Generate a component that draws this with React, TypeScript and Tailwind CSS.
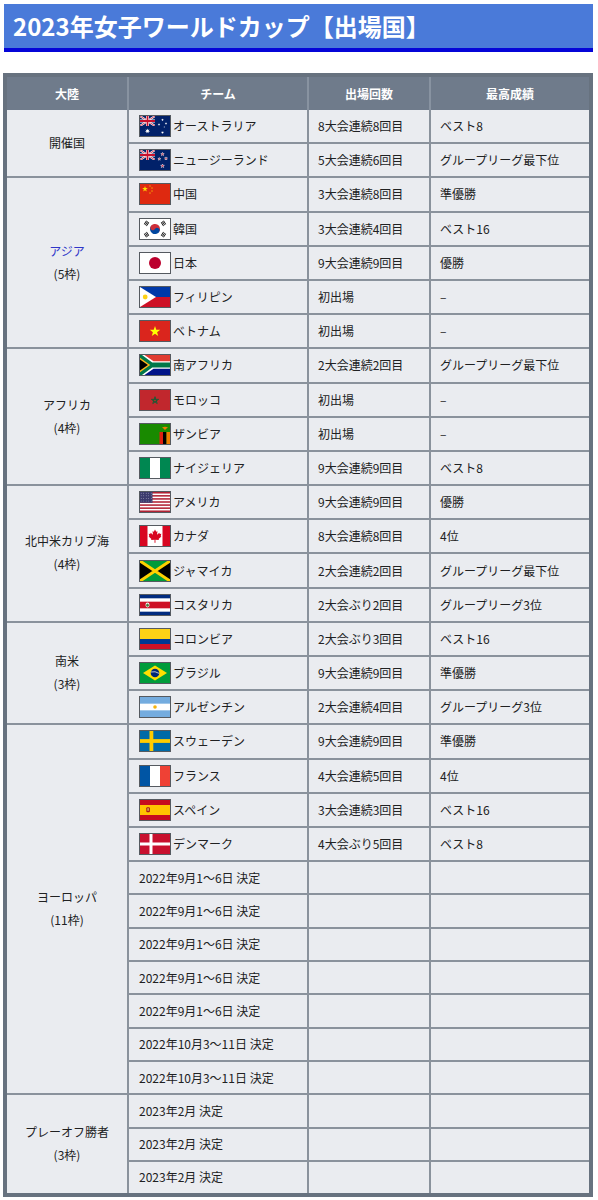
import React from "react";

const star = (cx: number, cy: number, r: number, n = 5, inner = 0.4) => {
  const pts: string[] = [];
  for (let i = 0; i < n * 2; i++) {
    const a = ((-90 + (i * 180) / n) * Math.PI) / 180;
    const rr = i % 2 ? r * inner : r;
    pts.push(`${(cx + rr * Math.cos(a)).toFixed(2)},${(cy + rr * Math.sin(a)).toFixed(2)}`);
  }
  return pts.join(" ");
};

const pentagram = (cx: number, cy: number, r: number) => {
  const pts: string[] = [];
  for (let i = 0; i < 5; i++) {
    const a = ((-90 + i * 144) * Math.PI) / 180;
    pts.push(`${(cx + r * Math.cos(a)).toFixed(2)},${(cy + r * Math.sin(a)).toFixed(2)}`);
  }
  return pts.join(" ");
};

const UnionJack = ({ id }: { id: string }) => (
  <g>
    <clipPath id={id}>
      <rect width="15" height="10" />
    </clipPath>
    <g clipPath={`url(#${id})`}>
      <rect width="15" height="10" fill="#012169" />
      <path d="M0,0 L15,10 M15,0 L0,10" stroke="#fff" strokeWidth="2" />
      <path d="M0,0 L15,10 M15,0 L0,10" stroke="#C8102E" strokeWidth="0.8" />
      <path d="M7.5,0 V10 M0,5 H15" stroke="#fff" strokeWidth="3" />
      <path d="M7.5,0 V10 M0,5 H15" stroke="#C8102E" strokeWidth="1.8" />
    </g>
  </g>
);

const FlagSvg = ({ code }: { code: string }) => {
  switch (code) {
    case "au":
      return (
        <>
          <rect width="30" height="20" fill="#012169" />
          <UnionJack id="ujau" />
          <polygon points={star(7.5, 15, 2.6, 7, 0.45)} fill="#fff" />
          <polygon points={star(22.5, 16.5, 1.5, 7, 0.45)} fill="#fff" />
          <polygon points={star(19, 8.5, 1.3, 7, 0.45)} fill="#fff" />
          <polygon points={star(22.5, 3.8, 1.3, 7, 0.45)} fill="#fff" />
          <polygon points={star(26, 7.5, 1.3, 7, 0.45)} fill="#fff" />
          <polygon points={star(24.3, 11, 0.8, 5, 0.45)} fill="#fff" />
        </>
      );
    case "nz":
      return (
        <>
          <rect width="30" height="20" fill="#012169" />
          <UnionJack id="ujnz" />
          {[
            [22.5, 4.2, 1.8],
            [26, 8.5, 1.6],
            [19.3, 9, 1.5],
            [22.5, 16, 2],
          ].map(([x, y, r], i) => (
            <polygon key={i} points={star(x, y, r)} fill="#C8102E" stroke="#fff" strokeWidth="0.5" />
          ))}
        </>
      );
    case "cn":
      return (
        <>
          <rect width="30" height="20" fill="#DE2910" />
          <polygon points={star(5, 5, 3)} fill="#FFDE00" />
          <polygon points={star(10, 2, 1)} fill="#FFDE00" />
          <polygon points={star(12, 4, 1)} fill="#FFDE00" />
          <polygon points={star(12, 7, 1)} fill="#FFDE00" />
          <polygon points={star(10, 9, 1)} fill="#FFDE00" />
        </>
      );
    case "kr": {
      const tri = (x: number, y: number, rot: number) => (
        <g transform={`translate(${x} ${y}) rotate(${rot})`}>
          <rect x="-2.2" y="-1.8" width="4.4" height="0.8" fill="#000" />
          <rect x="-2.2" y="-0.4" width="4.4" height="0.8" fill="#000" />
          <rect x="-2.2" y="1" width="4.4" height="0.8" fill="#000" />
        </g>
      );
      return (
        <>
          <rect width="30" height="20" fill="#fff" />
          <g transform="rotate(33.7 15 10)">
            <path d="M10,10 A5,5 0 0 1 20,10 Z" fill="#CD2E3A" />
            <path d="M10,10 A5,5 0 0 0 20,10 Z" fill="#0047A0" />
            <circle cx="12.5" cy="10" r="2.5" fill="#CD2E3A" />
            <circle cx="17.5" cy="10" r="2.5" fill="#0047A0" />
          </g>
          {tri(6.5, 4.3, -56.3)}
          {tri(23.5, 15.7, -56.3)}
          {tri(23.5, 4.3, 56.3)}
          {tri(6.5, 15.7, 56.3)}
        </>
      );
    }
    case "jp":
      return (
        <>
          <rect width="30" height="20" fill="#fff" />
          <circle cx="15" cy="10" r="6" fill="#BC002D" />
        </>
      );
    case "ph":
      return (
        <>
          <rect width="30" height="10" fill="#0038A8" />
          <rect y="10" width="30" height="10" fill="#CE1126" />
          <polygon points="0,0 16,10 0,20" fill="#fff" />
          <circle cx="5.2" cy="10" r="2.4" fill="#FCD116" />
        </>
      );
    case "vn":
      return (
        <>
          <rect width="30" height="20" fill="#DA251D" />
          <polygon points={star(15, 10.5, 5.5)} fill="#FFFF00" />
        </>
      );
    case "za":
      return (
        <>
          <rect width="30" height="10" fill="#E03C31" />
          <rect y="10" width="30" height="10" fill="#001489" />
          <polygon points="0,0 4.5,0 13.5,6.2 30,6.2 30,13.8 13.5,13.8 4.5,20 0,20" fill="#fff" />
          <polygon points="0,0 2,0 12.2,7.5 30,7.5 30,12.5 12.2,12.5 2,20 0,20" fill="#007749" />
          <polygon points="0,2.8 10.2,10 0,17.2" fill="#FFB81C" />
          <polygon points="0,4.4 7.9,10 0,15.6" fill="#000" />
        </>
      );
    case "ma":
      return (
        <>
          <rect width="30" height="20" fill="#C1272D" />
          <polygon points={pentagram(15, 10.5, 3.8)} fill="none" stroke="#006233" strokeWidth="0.8" />
        </>
      );
    case "zm":
      return (
        <>
          <rect width="30" height="20" fill="#198A00" />
          <rect x="19.5" y="8" width="3.5" height="12" fill="#DE2010" />
          <rect x="23" y="8" width="3.5" height="12" fill="#000" />
          <rect x="26.5" y="8" width="3.5" height="12" fill="#EF7D00" />
          <path d="M22,3.5 Q25,2 28,3.5 L26.5,4.5 L25,6 L23.5,4.5 Z" fill="#EF7D00" />
        </>
      );
    case "ng":
      return (
        <>
          <rect width="30" height="20" fill="#008751" />
          <rect x="10" width="10" height="20" fill="#fff" />
        </>
      );
    case "us": {
      const h = 20 / 13;
      return (
        <>
          <rect width="30" height="20" fill="#fff" />
          {Array.from({ length: 7 }).map((_, i) => (
            <rect key={i} y={i * 2 * h} width="30" height={h} fill="#B22234" />
          ))}
          <rect width="12.5" height={h * 7} fill="#3C3B6E" />
          {Array.from({ length: 20 }).map((_, i) => (
            <circle key={i} cx={1.2 + (i % 5) * 2.5} cy={1.2 + Math.floor(i / 5) * 2.6} r="0.35" fill="#fff" />
          ))}
        </>
      );
    }
    case "ca":
      return (
        <>
          <rect width="30" height="20" fill="#fff" />
          <rect width="7.5" height="20" fill="#D80621" />
          <rect x="22.5" width="7.5" height="20" fill="#D80621" />
          <polygon
            points="15,3.5 16.2,5.8 17.5,5.3 17,8.8 19.3,6.8 19.8,8 21.3,7.7 20.7,10.2 21.4,10.6 18.6,13 19,14.1 15.4,13.7 15.5,16.8 14.5,16.8 14.6,13.7 11,14.1 11.4,13 8.6,10.6 9.3,10.2 8.7,7.7 10.2,8 10.7,6.8 13,8.8 12.5,5.3 13.8,5.8"
            fill="#D80621"
          />
        </>
      );
    case "jm":
      return (
        <>
          <polygon points="0,0 30,0 15,10" fill="#009B3A" />
          <polygon points="0,20 30,20 15,10" fill="#009B3A" />
          <polygon points="0,0 0,20 15,10" fill="#000" />
          <polygon points="30,0 30,20 15,10" fill="#000" />
          <path d="M0,0 L30,20 M30,0 L0,20" stroke="#FED100" strokeWidth="3" />
        </>
      );
    case "cr":
      return (
        <>
          <rect width="30" height="20" fill="#002B7F" />
          <rect y="3.33" width="30" height="13.34" fill="#fff" />
          <rect y="6.67" width="30" height="6.66" fill="#CE1126" />
          <ellipse cx="7.5" cy="10" rx="2" ry="2.4" fill="#fff" />
          <ellipse cx="7.5" cy="10.2" rx="1.3" ry="1.6" fill="#4a7a3a" />
        </>
      );
    case "co":
      return (
        <>
          <rect width="30" height="10" fill="#FCD116" />
          <rect y="10" width="30" height="5" fill="#003893" />
          <rect y="15" width="30" height="5" fill="#CE1126" />
        </>
      );
    case "br":
      return (
        <>
          <rect width="30" height="20" fill="#009C3B" />
          <polygon points="3,10 15,2.5 27,10 15,17.5" fill="#FFDF00" />
          <circle cx="15" cy="10" r="4.3" fill="#002776" />
          <path d="M10.9,9 Q15,7.8 19.2,10.4" stroke="#fff" strokeWidth="0.7" fill="none" />
        </>
      );
    case "ar":
      return (
        <>
          <rect width="30" height="20" fill="#74ACDF" />
          <rect y="6.67" width="30" height="6.66" fill="#fff" />
          <circle cx="15" cy="10" r="1.8" fill="#F6B40E" />
        </>
      );
    case "se":
      return (
        <>
          <rect width="30" height="20" fill="#006AA7" />
          <rect x="9.5" width="3.8" height="20" fill="#FECC00" />
          <rect y="8.1" width="30" height="3.8" fill="#FECC00" />
        </>
      );
    case "fr":
      return (
        <>
          <rect width="10" height="20" fill="#0055A4" />
          <rect x="10" width="10" height="20" fill="#fff" />
          <rect x="20" width="10" height="20" fill="#EF4135" />
        </>
      );
    case "es":
      return (
        <>
          <rect width="30" height="20" fill="#C60B1E" />
          <rect y="5" width="30" height="10" fill="#FFC400" />
          <rect x="6.3" y="7.3" width="3.6" height="5" rx="1" fill="#AD1519" />
          <rect x="7.2" y="8.2" width="1.8" height="2.6" fill="#c8a050" />
        </>
      );
    case "dk":
      return (
        <>
          <rect width="30" height="20" fill="#C8102E" />
          <rect x="9.5" width="3" height="20" fill="#fff" />
          <rect y="8.5" width="30" height="3" fill="#fff" />
        </>
      );
    default:
      return null;
  }
};

const Flag = ({ code }: { code: string }) => (
  <span className="inline-flex w-[32px] h-[22px] border border-[#555a60] shrink-0 bg-white">
    <svg viewBox="0 0 30 20" width="30" height="20" preserveAspectRatio="none" className="block">
      <FlagSvg code={code} />
    </svg>
  </span>
);

type Row = { flag?: string; name: string; c?: string; b?: string };
type Group = { label: string; sub?: string; link?: boolean; rows: Row[] };

const e1 = "2022年9月1〜6日 決定";
const e2 = "2022年10月3〜11日 決定";
const p = "2023年2月 決定";

const groups: Group[] = [
  {
    label: "開催国",
    rows: [
      { flag: "au", name: "オーストラリア", c: "8大会連続8回目", b: "ベスト8" },
      { flag: "nz", name: "ニュージーランド", c: "5大会連続6回目", b: "グループリーグ最下位" },
    ],
  },
  {
    label: "アジア",
    sub: "(5枠)",
    link: true,
    rows: [
      { flag: "cn", name: "中国", c: "3大会連続8回目", b: "準優勝" },
      { flag: "kr", name: "韓国", c: "3大会連続4回目", b: "ベスト16" },
      { flag: "jp", name: "日本", c: "9大会連続9回目", b: "優勝" },
      { flag: "ph", name: "フィリピン", c: "初出場", b: "–" },
      { flag: "vn", name: "ベトナム", c: "初出場", b: "–" },
    ],
  },
  {
    label: "アフリカ",
    sub: "(4枠)",
    rows: [
      { flag: "za", name: "南アフリカ", c: "2大会連続2回目", b: "グループリーグ最下位" },
      { flag: "ma", name: "モロッコ", c: "初出場", b: "–" },
      { flag: "zm", name: "ザンビア", c: "初出場", b: "–" },
      { flag: "ng", name: "ナイジェリア", c: "9大会連続9回目", b: "ベスト8" },
    ],
  },
  {
    label: "北中米カリブ海",
    sub: "(4枠)",
    rows: [
      { flag: "us", name: "アメリカ", c: "9大会連続9回目", b: "優勝" },
      { flag: "ca", name: "カナダ", c: "8大会連続8回目", b: "4位" },
      { flag: "jm", name: "ジャマイカ", c: "2大会連続2回目", b: "グループリーグ最下位" },
      { flag: "cr", name: "コスタリカ", c: "2大会ぶり2回目", b: "グループリーグ3位" },
    ],
  },
  {
    label: "南米",
    sub: "(3枠)",
    rows: [
      { flag: "co", name: "コロンビア", c: "2大会ぶり3回目", b: "ベスト16" },
      { flag: "br", name: "ブラジル", c: "9大会連続9回目", b: "準優勝" },
      { flag: "ar", name: "アルゼンチン", c: "2大会連続4回目", b: "グループリーグ3位" },
    ],
  },
  {
    label: "ヨーロッパ",
    sub: "(11枠)",
    rows: [
      { flag: "se", name: "スウェーデン", c: "9大会連続9回目", b: "準優勝" },
      { flag: "fr", name: "フランス", c: "4大会連続5回目", b: "4位" },
      { flag: "es", name: "スペイン", c: "3大会連続3回目", b: "ベスト16" },
      { flag: "dk", name: "デンマーク", c: "4大会ぶり5回目", b: "ベスト8" },
      { name: e1 },
      { name: e1 },
      { name: e1 },
      { name: e1 },
      { name: e1 },
      { name: e2 },
      { name: e2 },
    ],
  },
  {
    label: "プレーオフ勝者",
    sub: "(3枠)",
    rows: [{ name: p }, { name: p }, { name: p }],
  },
];

export default function App() {
  return (
    <div className="w-[598px] bg-white pt-[4px] pb-[4px] font-['Noto_Sans_CJK_JP','Noto_Sans',sans-serif] text-[#202122]">
      <div className="ml-[4px] mr-[5px] h-[48px] bg-[#4a7ad9] border-b-[4px] border-[#0505d8] flex items-center pl-[9px]">
        <h1 className="text-white font-bold text-[24px] leading-none">
          2023年女子ワールドカップ【出場国】
        </h1>
      </div>

      <div className="mt-[21px] ml-[3px] mr-[5px] border-[4px] border-[#67727f] bg-[#eaecf0] text-[12px]">
        <div className="grid grid-cols-[120px_180px_122px_1fr] h-[33px] bg-[#6f7b8b] text-white font-bold">
          <div className="flex items-center justify-center">大陸</div>
          <div className="flex items-center justify-center border-l-2 border-[#8893a1]">チーム</div>
          <div className="flex items-center justify-center border-l-2 border-[#8893a1]">出場回数</div>
          <div className="flex items-center justify-center border-l-2 border-[#8893a1]">最高成績</div>
        </div>
        {groups.map((g, gi) => (
          <div
            key={gi}
            className={`flex ${gi < groups.length - 1 ? "border-b-2 border-[#8a929c]" : ""}`}
          >
            <div className="w-[120px] shrink-0 flex flex-col items-center justify-center leading-[23px] pb-[2px]">
              <span className={g.link ? "text-[#2f36c8]" : ""}>{g.label}</span>
              {g.sub && <span>{g.sub}</span>}
            </div>
            <div className="flex-1 border-l-2 border-[#8a929c]">
              {g.rows.map((r, ri) => {
                const last = ri === g.rows.length - 1;
                const h = r.flag
                  ? last
                    ? "h-[32.2px]"
                    : "h-[34.2px]"
                  : last
                  ? "h-[31.3px]"
                  : "h-[33.3px]";
                return (
                  <div
                    key={ri}
                    className={`grid grid-cols-[178px_122px_1fr] ${h} ${last ? "" : "border-b-2 border-[#8a929c]"}`}
                  >
                    <div className="flex items-center pl-[10px] gap-[2px] whitespace-nowrap">
                      {r.flag && <Flag code={r.flag} />}
                      <span>{r.name}</span>
                    </div>
                    <div className="flex items-center pl-[9px] border-l-2 border-[#8a929c] whitespace-nowrap">
                      {r.c ?? ""}
                    </div>
                    <div className="flex items-center pl-[9px] border-l-2 border-[#8a929c] whitespace-nowrap">
                      {r.b ?? ""}
                    </div>
                  </div>
                );
              })}
            </div>
          </div>
        ))}
      </div>
    </div>
  );
}
